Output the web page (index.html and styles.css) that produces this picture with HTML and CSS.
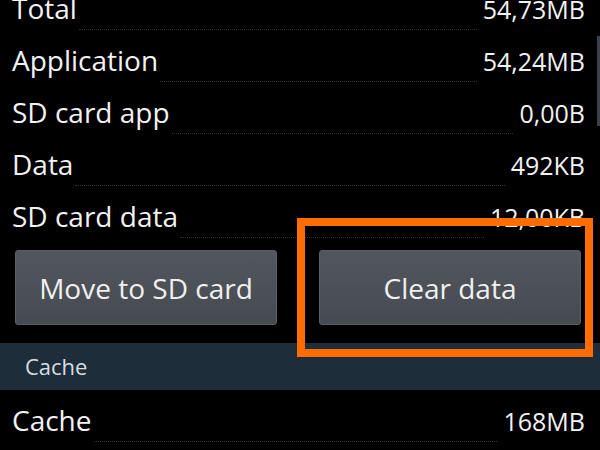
FILE: index.html
```html
<!DOCTYPE html>
<html>
<head>
  <title>Storage</title>
  <link rel="stylesheet" href="styles.css">
</head>
<body>

<div class="screen">
  <div class="list">
    <div class="row"><span class="label">Total</span><span class="dots"></span><span class="value">54,73MB</span></div>
    <div class="row"><span class="label">Application</span><span class="dots"></span><span class="value">54,24MB</span></div>
    <div class="row"><span class="label">SD card app</span><span class="dots"></span><span class="value">0,00B</span></div>
    <div class="row"><span class="label">Data</span><span class="dots"></span><span class="value">492KB</span></div>
    <div class="row"><span class="label">SD card data</span><span class="dots"></span><span class="value">12,00KB</span></div>
  </div>

  <div class="actions">
    <button class="btn">Move to SD card</button>
    <button class="btn">Clear data</button>
  </div>

  <div class="section">Cache</div>

  <div class="list">
    <div class="row"><span class="label">Cache</span><span class="dots"></span><span class="value">168MB</span></div>
  </div>

  <div class="scrollbar"></div>
  <div class="highlight"></div>
</div>

</body>
</html>
```

FILE: styles.css
```css
body {
  margin: 0;
  background-color: #000;
  font-family: "Open Sans", "Noto Sans", sans-serif;
  color: #f2f2f2;
  overflow: hidden;
}

.screen {
  position: relative;
  width: 600px;
  height: 450px;
  overflow: hidden;
}

.list:first-child {
  margin-top: -22px;
}

.row {
  display: flex;
  align-items: baseline;
  height: 52px;
  box-sizing: border-box;
  padding: 8px 15px 0 12px;
  font-size: 28px;
  line-height: 44px;
}

.value {
  font-size: 25px;
}

.dots {
  flex: 1;
  align-self: flex-start;
  margin: 43px 6px 0 2px;
  border-top: 1px dotted #2e2e2e;
}

/* Buttons */
.actions {
  display: flex;
  gap: 42px;
  padding: 12px 19px 0 15px;
}

.btn {
  flex: 1;
  height: 75px;
  border: 1px solid #5a5f66;
  border-radius: 3px;
  background: linear-gradient(#52575e, #464a51);
  color: #f0f0f0;
  font-family: "Open Sans", "Noto Sans", sans-serif;
  font-size: 28px;
}

.section {
  margin-top: 18px;
  height: 47px;
  line-height: 47px;
  padding-left: 25px;
  background-color: #1e2d3a;
  color: #d8dde2;
  font-size: 22px;
}

.scrollbar {
  position: absolute;
  right: 0;
  top: 36px;
  width: 3px;
  height: 90px;
  background-color: #3b4149;
}

/* Orange annotation box */
.highlight {
  position: absolute;
  left: 297px;
  top: 218px;
  width: 280px;
  height: 123px;
  border: 8px solid #ff6d00;
}
```
